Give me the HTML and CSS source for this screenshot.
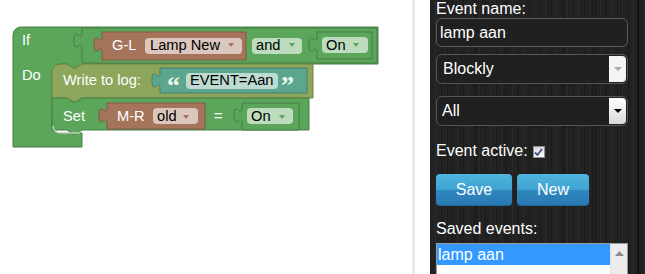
FILE: index.html
```html
<!DOCTYPE html>
<html lang="en">
<head>
    <meta charset="UTF-8">
    <title>Events</title>
    <link rel="stylesheet" href="styles.css">
</head>
<body>
    <div class="workspace">
        <svg class="blocks" width="412" height="274" viewBox="0 0 412 274">
            <!-- If / Do -->
            <path class="green" d="M13,35 A8,8 0 0 1 21,27 H378 V64 H82 l-6,4 -3,0 -6,-4 H60 A8,8 0 0 0 52,72 V125 A8,8 0 0 0 60,133 H82 V147 H13 Z"/>
            <path class="green" d="M82,28 H377 V63 H82 V48 C82,38 74,56 74,40.5 C74,25 82,43 82,33 Z"/>
            <path class="brown" d="M102,32 H246 V60 H102 V52 C102,42 94,60 94,44.5 C94,29 102,47 102,37 Z"/>
            <path class="green" d="M317,32 H372 V59 H317 V52 C317,42 309,60 309,44.5 C309,29 317,47 317,37 Z"/>

            <!-- Write to log -->
            <path class="olive" d="M52,72 A8,8 0 0 1 60,64 H67 l6,4 3,0 6,-4 H313 V98 H82 l-6,4 -3,0 -6,-4 H52 Z"/>
            <path class="teal" d="M160,68 H307 V93 H160 V88 C160,78 152,96 152,80.5 C152,65 160,83 160,73 Z"/>

            <!-- Set -->
            <path class="green" d="M52,98 H67 l6,4 3,0 6,-4 H309 V130 H82 l-6,4 -3,0 -6,-4 H52 Z"/>
            <path class="brown" d="M107,103 H205 V129 H107 V123 C107,113 99,131 99,115.5 C99,100 107,118 107,108 Z"/>
            <path class="green" d="M242,103 H299 V130 H242 V123 C242,113 234,131 234,115.5 C234,100 242,118 242,108 Z"/>
            <path class="shine" d="M53,126 A7,7 0 0 0 60,133 H80"/>

            <!-- fields -->
            <rect class="pill" x="145" y="38" width="97" height="16" rx="4"/>
            <rect class="pill" x="252" y="38" width="50" height="16" rx="4"/>
            <rect class="pill" x="322" y="37" width="46" height="16" rx="4"/>
            <rect class="pill" x="186" y="73" width="92" height="16" rx="4"/>
            <rect class="pill" x="153" y="108" width="45" height="16" rx="4"/>
            <rect class="pill" x="247" y="108" width="46" height="16" rx="4"/>

            <polygon class="arrow-brown" points="228,43 234,43 231,47"/>
            <polygon class="arrow-green" points="289,43 295,43 292,47"/>
            <polygon class="arrow-green" points="353,43 359,43 356,47"/>
            <polygon class="arrow-brown" points="183,115 189,115 186,119"/>
            <polygon class="arrow-green" points="279,115 285,115 282,119"/>

            <text class="label" x="22" y="45">If</text>
            <text class="label" x="22" y="80">Do</text>
            <text class="label" x="112" y="50">G-L</text>
            <text class="value" x="150" y="50">Lamp New</text>
            <text class="value" x="256" y="50">and</text>
            <text class="value" x="326" y="50">On</text>

            <text class="label" x="63" y="85">Write to log:</text>
            <text class="quote" x="167" y="94">“</text>
            <text class="value" x="190" y="85">EVENT=Aan</text>
            <text class="quote" x="281" y="94">”</text>

            <text class="label" x="63" y="121">Set</text>
            <text class="label" x="117" y="121">M-R</text>
            <text class="value" x="157" y="121">old</text>
            <text class="label" x="214" y="121">=</text>
            <text class="value" x="251" y="121">On</text>
        </svg>
    </div>
    <div class="divider"></div>
    <div class="gutter"></div>

    <div class="panel">
        <div class="caption">Event name:</div>
        <input class="name-input" type="text" value="lamp aan">

        <div class="dropdown type-select">
            <span class="dropdown-text">Blockly</span>
            <span class="dropdown-btn off">
                <svg width="8" height="5" viewBox="0 0 8 5"><polygon points="0,0 8,0 4,4" fill="#a9a9a9"/></svg>
            </span>
        </div>

        <div class="dropdown device-select">
            <span class="dropdown-text">All</span>
            <span class="dropdown-btn">
                <svg width="8" height="5" viewBox="0 0 8 5"><polygon points="0,0 8,0 4,4" fill="#000"/></svg>
            </span>
        </div>

        <div class="active-row">
            Event active:
            <span class="checkbox">
                <svg width="9" height="9" viewBox="0 0 9 9"><path d="M1,4.5 L3.5,7 L8,1" fill="none" stroke="#3b4f8c" stroke-width="1.8"/></svg>
            </span>
        </div>

        <div class="buttons">
            <button class="btn save-btn">Save</button>
            <button class="btn new-btn">New</button>
        </div>

        <div class="caption saved-caption">Saved events:</div>
        <div class="event-list">
            <div class="event-items">
                <div class="event-item selected">lamp aan</div>
            </div>
            <div class="scrollbar">
                <svg width="9" height="5" viewBox="0 0 9 5"><polygon points="0,5 9,5 4.5,0" fill="#8c8c8c"/></svg>
            </div>
        </div>
    </div>
</body>
</html>
```

FILE: styles.css
```css
body {
    margin: 0;
    display: flex;
    height: 274px;
    overflow: hidden;
    background: white;
    font-family: 'Liberation Sans', Arial, sans-serif;
}
.workspace {
    width: 412px;
    flex: none;
}
.blocks {
    display: block;
}
.blocks path {
    stroke-width: 1;
}
.green {
    fill: #5ba65b;
    stroke: #467f46;
}
.olive {
    fill: #8da65b;
    stroke: #6e8247;
}
.brown {
    fill: #a6745b;
    stroke: #805a47;
}
.teal {
    fill: #5ba68d;
    stroke: #47806d;
}
.shine {
    fill: none;
    stroke: #e6f2e6;
    stroke-width: 1.5;
}
.pill {
    fill: white;
    fill-opacity: 0.6;
}
.arrow-brown {
    fill: #a6745b;
}
.arrow-green {
    fill: #5ba65b;
}
.blocks text {
    font-family: 'Liberation Sans', Arial, sans-serif;
    font-size: 11pt;
}
.blocks .label {
    fill: white;
}
.blocks .value {
    fill: black;
}
.blocks .quote {
    font-family: 'Liberation Serif', serif;
    font-weight: bold;
    font-size: 26px;
    fill: #f0f7f3;
}
.divider {
    width: 3px;
    flex: none;
    background: #ececec;
}
.gutter {
    width: 15px;
    flex: none;
}
.panel {
    width: 209px;
    flex: none;
    padding-left: 6px;
    color: white;
    font-size: 16px;
    background-color: #222;
    background-image:
        linear-gradient(90deg, transparent 207px, #131313 207px, #131313 209px, transparent 209px),
        repeating-linear-gradient(90deg, rgba(0,0,0,0.22) 0 1px, transparent 1px 5px, rgba(255,255,255,0.035) 5px 6px, transparent 6px 11px),
        repeating-linear-gradient(90deg, transparent 0 17px, rgba(0,0,0,0.25) 17px 18px, transparent 18px 29px);
}
.caption {
    line-height: 18px;
}
.name-input {
    display: block;
    box-sizing: border-box;
    width: 192px;
    height: 29px;
    margin: 0;
    padding: 0 3px;
    border: 1px solid #5c5c5c;
    border-radius: 6px;
    background: #202020;
    color: white;
    font-family: inherit;
    font-size: 16px;
    outline: none;
}
.dropdown {
    box-sizing: border-box;
    width: 192px;
    height: 30px;
    display: flex;
    align-items: stretch;
    border: 1px solid #555;
    border-radius: 6px;
    background: #202020;
}
.type-select {
    margin-top: 7px;
}
.device-select {
    margin-top: 12px;
}
.dropdown-text {
    flex: 1;
    display: flex;
    align-items: center;
    padding-left: 6px;
}
.device-select .dropdown-text {
    padding-left: 5px;
}
.dropdown-btn {
    width: 17px;
    margin: 1px 1px 1px 0;
    display: flex;
    align-items: center;
    justify-content: center;
    border-radius: 0 4px 4px 0;
    background: linear-gradient(#fff, #dadada);
}
.dropdown-btn.off {
    background: #f4f4f4;
}
.active-row {
    margin-top: 16px;
    line-height: 18px;
    display: flex;
    align-items: center;
    gap: 5px;
}
.checkbox {
    box-sizing: border-box;
    width: 12px;
    height: 12px;
    margin-top: 2px;
    display: flex;
    align-items: center;
    justify-content: center;
    border: 1px solid #8e8f8f;
    background: linear-gradient(#dcdcdc, #fbfbfb);
}
.buttons {
    margin-top: 14px;
    display: flex;
    gap: 5px;
}
.btn {
    height: 32px;
    padding: 0;
    border: none;
    border-radius: 4px;
    color: white;
    font-family: inherit;
    font-size: 16px;
    background: linear-gradient(#4fb5de, #3fa2d2 50%, #2f88c0 50%, #2878b1);
    box-shadow: inset 0 -1px 0 rgba(0,0,0,0.15);
}
.save-btn {
    width: 76px;
}
.new-btn {
    width: 72px;
}
.saved-caption {
    margin-top: 14px;
}
.event-list {
    box-sizing: border-box;
    width: 192px;
    height: 40px;
    margin-top: 5px;
    display: flex;
    border: 1px solid #9a9a9a;
    border-bottom: none;
    background: white;
}
.event-items {
    flex: 1;
}
.event-item {
    height: 21px;
    line-height: 21px;
    padding-left: 1px;
}
.event-item.selected {
    background: #3399ff;
    color: white;
}
.scrollbar {
    width: 17px;
    display: flex;
    justify-content: center;
    padding-top: 7px;
    box-sizing: border-box;
    background: #ececec;
    border-left: 1px solid #e0e0e0;
}
.scrollbar svg {
    display: block;
}
```
